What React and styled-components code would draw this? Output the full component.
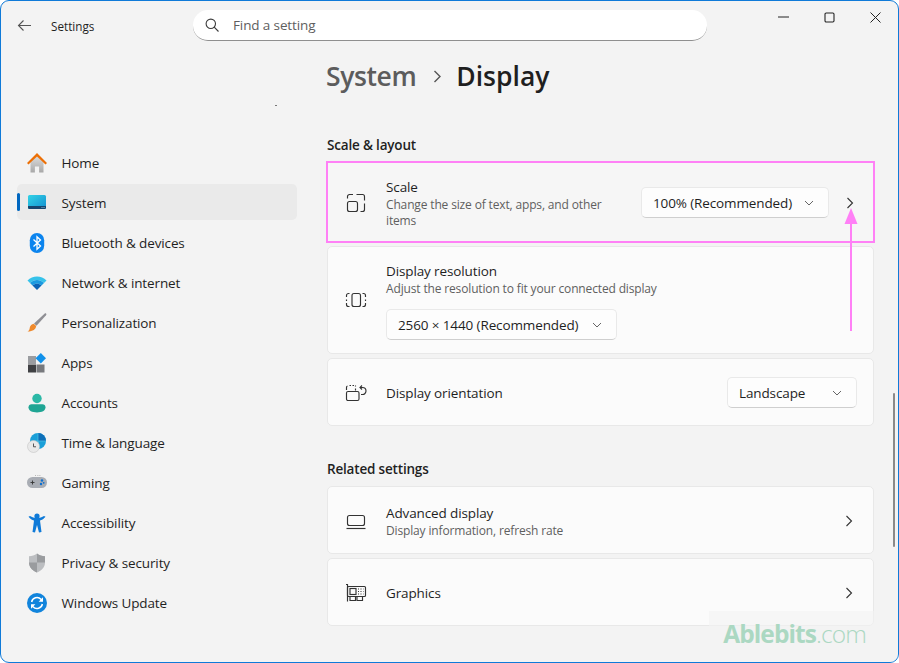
import styled, { createGlobalStyle } from 'styled-components';

const GlobalStyle = createGlobalStyle`
  html, body {
    margin: 0;
    background: #fff;
  }
  * {
    box-sizing: border-box;
  }
`;

const Window = styled.div`
  position: relative;
  width: 899px;
  height: 663px;
  overflow: hidden;
  background: #f3f3f3;
  border: 1.5px solid #0f7ad8;
  border-radius: 9px;
  font-family: 'Open Sans', 'Noto Sans', sans-serif;
  font-size: 13.5px;
  letter-spacing: -0.12px;
  color: #1f1f1f;
`;

const TitleBar = styled.header`
  display: flex;
  align-items: center;
  height: 49px;
  padding-left: 16px;
`;

const BackButton = styled.span`
  display: flex;
  width: 34px;
`;

const AppName = styled.span`
  width: 142px;
  font-size: 11.7px;
  letter-spacing: 0;
`;

const SearchBox = styled.div`
  display: flex;
  align-items: center;
  gap: 14px;
  width: 514px;
  height: 31px;
  margin-top: -1px;
  padding-left: 12px;
  background: #fff;
  border-bottom: 1px solid #8f8f8f;
  border-radius: 15px;
  color: #5e5e5e;
`;

const WindowControls = styled.div`
  display: flex;
  margin-left: auto;
  align-self: flex-start;
`;

const WindowButton = styled.span`
  display: flex;
  justify-content: center;
  align-items: center;
  width: 46px;
  height: 32px;
`;

const Body = styled.div`
  display: flex;
`;

const Sidebar = styled.nav`
  position: relative;
  display: flex;
  flex-direction: column;
  gap: 4px;
  width: 326px;
  padding: 93.5px 0 0 15.5px;
`;

const StrayDot = styled.i`
  position: absolute;
  left: 274px;
  top: 55px;
  width: 2px;
  height: 1px;
  background: #777;
`;

const NavItem = styled.div`
  position: relative;
  display: flex;
  align-items: center;
  gap: 15px;
  width: 280px;
  height: 36px;
  padding: 3px 0 0 10px;
  border-radius: 5px;
  background: ${(p) => (p.$active ? '#eaeaea' : 'transparent')};

  ${(p) =>
    p.$active &&
    `&::before {
      content: '';
      position: absolute;
      left: 0;
      top: 9px;
      width: 3px;
      height: 18px;
      border-radius: 2px;
      background: #0067c0;
    }`}
`;

const NavIcon = styled.svg`
  width: 20px;
  height: 20px;
  flex: none;
`;

const Main = styled.main`
  width: 547px;
  padding-top: 6px;
`;

const PageTitle = styled.h1`
  display: flex;
  align-items: center;
  height: 40px;
  margin: 0 0 39px -1px;
  font-size: 26.5px;
  font-weight: 600;
  letter-spacing: 0;
`;

const Crumb = styled.span`
  letter-spacing: -0.4px;
  color: #5c5c5c;
`;

const CrumbArrow = styled.span`
  display: flex;
  margin: 0 14px 0 17px;
`;

const SectionTitle = styled.h2`
  height: 20px;
  margin: ${(p) => (p.$first ? '0' : '33px')} 0 7px;
  font-size: 13.5px;
  font-weight: 600;
  line-height: 20px;
  letter-spacing: -0.18px;
`;

const CardList = styled.div`
  display: flex;
  flex-direction: column;
  gap: 4px;
`;

const Card = styled.section`
  display: flex;
  align-items: center;
  gap: 19px;
  height: ${(p) => p.$height}px;
  padding: ${(p) => (p.$stacked ? '0' : '2px')} 16px 0 17px;
  background: ${(p) => (p.$highlight ? '#f6f6f6' : '#fbfbfb')};
  border: 1px solid ${(p) => (p.$highlight ? 'transparent' : '#e8e8e8')};
  border-radius: ${(p) => (p.$highlight ? '0' : '5px')};
  ${(p) => p.$highlight && 'outline: 2px solid #ff80f6; outline-offset: -1px;'}
`;

const RowIcon = styled.svg`
  width: 22px;
  height: 22px;
  flex: none;
  fill: none;
  stroke: #333;
  stroke-width: 1.15;
`;

const RowText = styled.div`
  flex: 1;
  min-width: 0;
  ${(p) => p.$stacked && 'align-self: flex-start; padding-top: 14px;'}
`;

const RowTitle = styled.div`
  line-height: 20px;
`;

const RowDesc = styled.div`
  max-width: ${(p) => p.$max || '300px'};
  font-size: 12px;
  line-height: 16px;
  letter-spacing: -0.15px;
  color: #5f5f5f;
`;

const Select = styled.div`
  display: flex;
  justify-content: space-between;
  align-items: center;
  flex: none;
  width: ${(p) => p.$width}px;
  height: 31px;
  margin-top: ${(p) => (p.$stacked ? '12px' : '-2px')};
  padding: ${(p) => (p.$stacked ? '0' : '2px')} 14px 0 11px;
  background: #fdfdfd;
  border: 1px solid #e9e9e9;
  border-bottom-color: #cfcfcf;
  border-radius: 5px;
`;

const ChevronBox = styled.span`
  display: flex;
  justify-content: center;
  flex: none;
  width: ${(p) => (p.$tight ? 10 : 16)}px;
  ${(p) => p.$tight && 'margin: 0 2px 0 -3px;'}
`;

const Scrollbar = styled.i`
  position: absolute;
  right: 3px;
  top: 392px;
  width: 2px;
  height: 154px;
  border-radius: 1px;
  background: #8a8a8a;
`;

const Watermark = styled.div`
  position: absolute;
  right: 0;
  bottom: 0;
  padding: 8px 32px 13px 14px;
  background: rgba(243, 243, 243, 0.55);
  font-size: 24.5px;
  line-height: 30px;
  letter-spacing: -0.9px;
  font-weight: 700;
  color: #abd8c2;

  span {
    font-weight: 300;
  }
`;

const Annotation = styled.svg`
  position: absolute;
  left: 838px;
  top: 204px;
  width: 24px;
  height: 128px;
`;

const Chevron = () => (
  <svg width="8" height="12" viewBox="0 0 8 12" fill="none">
    <path d="M1.500 1 6.500 6l-5 5" stroke="#333" strokeWidth="1.100" />
  </svg>
);

const ChevronDown = () => (
  <svg width="10" height="6" viewBox="0 0 10 6" fill="none">
    <path d="M1 1l4 4 4-4" stroke="#666" strokeWidth="1" />
  </svg>
);

const icons = {
  home: (
    <>
      <defs>
        <linearGradient id="homeWall" x1="0" y1="0" x2="0" y2="1">
          <stop offset="0" stopColor="#dcdcdc" />
          <stop offset="1" stopColor="#a8a8a8" />
        </linearGradient>
      </defs>
      <path d="M3.500 9 10 3l6.500 6v10.500h-4.400v-6H7.900v6H3.500z" fill="url(#homeWall)" />
      <path d="M0 10 10 0l10 10-1.500 1.500L10 3.400 1.500 11.500z" fill="#ec6f05" />
    </>
  ),
  system: (
    <>
      <defs>
        <linearGradient id="sysScreen" x1="0" y1="0" x2="1" y2="1">
          <stop offset="0" stopColor="#33d3e6" />
          <stop offset="1" stopColor="#128fd0" />
        </linearGradient>
      </defs>
      <rect x="1" y="2" width="18" height="14" rx="1.500" fill="url(#sysScreen)" />
      <path d="M1 13h18v1.500a1.500 1.500 0 0 1-1.500 1.500h-15A1.500 1.500 0 0 1 1 14.500z" fill="#17456e" />
      <path d="M14.500 14.500h1M16.500 14.500h1" stroke="#9fd3ea" strokeWidth="0.800" />
    </>
  ),
  bluetooth: (
    <>
      <rect x="2.800" y="0" width="14.400" height="20" rx="7.200" fill="#0b84ee" />
      <path d="M6.500 6.500l7 6.500-3.500 3.200V3.800l3.500 3.200-7 6.500" fill="none" stroke="#fff" strokeWidth="1.300" />
    </>
  ),
  wifi: (
    <>
      <path d="M.5 7.500C5.500 2.200 14.500 2.200 19.500 7.500L17 10C13 6 7 6 3 10z" fill="#36c2ea" />
      <path d="M3 10c4-4 10-4 14 0l-2.500 2.500c-2.500-2.500-6.500-2.500-9 0z" fill="#1a9ae0" />
      <path d="M5.500 12.500c2.500-2.500 6.500-2.500 9 0L10 17z" fill="#0b63b5" />
    </>
  ),
  brush: (
    <>
      <path d="M19 .5c.6.500.5 1.200 0 1.800L9.500 12.800 7 10.500 17.500.8c.5-.4 1-.6 1.500-.3z" fill="#8f8f94" />
      <path d="M6.700 10.800 9.200 13c-.3 3-3 5.500-8.700 5.500 2-1 2-2.200 2.300-4 .3-1.800 2-3.500 3.900-3.700z" fill="#ef8a2d" />
    </>
  ),
  apps: (
    <>
      <rect x="1" y="3" width="8" height="8" fill="#9a9ca0" />
      <rect x="1" y="11.500" width="8" height="8" fill="#3f4043" />
      <rect x="9.500" y="11.500" width="8" height="8" fill="#77797d" />
      <path d="M13.800 0 19 5.200l-5.200 5.200-5.200-5.200z" fill="#1191ea" />
    </>
  ),
  accounts: (
    <>
      <circle cx="10" cy="5.500" r="4.700" fill="#2bb8a6" />
      <path d="M1.500 14.300c0-1.800 1.400-3 3-3h11c1.600 0 3 1.200 3 3 0 3.400-3.600 5.200-8.500 5.200s-8.500-1.800-8.500-5.200z" fill="#1fa594" />
    </>
  ),
  time: (
    <>
      <circle cx="11" cy="8" r="8" fill="#1a9fd8" />
      <path d="M11 0a8 8 0 0 1 8 8h-8z" fill="#0d6fb8" />
      <path d="M3 8h16M11 0v16" stroke="#5ecae8" strokeWidth="0.600" />
      <circle cx="6.500" cy="13.500" r="6" fill="#e9e9e9" stroke="#c4c4c4" strokeWidth="0.600" />
      <path d="M6.500 10.500v3.300h2.500" fill="none" stroke="#444" strokeWidth="0.900" />
    </>
  ),
  gaming: (
    <>
      <rect x="0" y="4" width="20" height="11" rx="5.500" fill="#a9adb4" />
      <path d="M3.500 9.500h4M5.500 7.500v4" stroke="#333" strokeWidth="0.900" />
      <circle cx="15" cy="7.500" r="1.200" fill="#0b6fd0" />
      <circle cx="14" cy="11" r="1.200" fill="#0b6fd0" />
      <circle cx="16.700" cy="9.800" r="0.900" fill="#0b6fd0" />
      <path d="M8 2.500h.8M10.500 2.500h.8M12.500 2.500h.8" stroke="#888" strokeWidth="0.700" />
    </>
  ),
  accessibility: (
    <>
      <circle cx="10" cy="3" r="2.600" fill="#0f7ad8" />
      <path d="M1.500 3.800 3 3c2 1.300 4 2 7 2s5-.7 7-2l1.500.8c-1.500 2-3.500 3.200-5.500 3.800L14.500 19l-2.500.5L10 12l-2 7.500-2.500-.5L7 7.600C5 7 3 5.800 1.500 3.800z" fill="#0f7ad8" />
    </>
  ),
  shield: (
    <>
      <path d="M10 .5c2.500 1.800 5 2.600 8 2.800v6.200c0 4.700-3.300 8.200-8 10-4.700-1.800-8-5.300-8-10V3.300C5 3.100 7.500 2.300 10 .5z" fill="#bcbec1" />
      <path d="M10 .5c2.500 1.800 5 2.600 8 2.800v6.200h-8zM10 9.500H2c0 4.700 3.300 8.200 8 10z" fill="#9a9c9f" />
    </>
  ),
  update: (
    <>
      <circle cx="10" cy="10" r="10" fill="#1184dc" />
      <path d="M4.600 9A5.500 5.500 0 0 1 14 6.300L15.400 8M15.400 11A5.500 5.500 0 0 1 6 13.700L4.600 12" fill="none" stroke="#fff" strokeWidth="1.500" />
      <path d="M16 4.300V8.700h-4.400zM4 15.700v-4.400h4.400z" fill="#fff" />
    </>
  ),
};

const navItems = [
  ['home', 'Home'],
  ['system', 'System'],
  ['bluetooth', 'Bluetooth & devices'],
  ['wifi', 'Network & internet'],
  ['brush', 'Personalization'],
  ['apps', 'Apps'],
  ['accounts', 'Accounts'],
  ['time', 'Time & language'],
  ['gaming', 'Gaming'],
  ['accessibility', 'Accessibility'],
  ['shield', 'Privacy & security'],
  ['update', 'Windows Update'],
];

const ScaleIcon = () => (
  <RowIcon viewBox="0 0 22 22">
    <path d="M2.500 6.500V4.500a2 2 0 0 1 2-2H8M11.500 2.500h6a2 2 0 0 1 2 2v4M19.500 11.500v6a2 2 0 0 1-2 2h-2" />
    <rect x="2.500" y="9.500" width="10" height="10" rx="2" />
  </RowIcon>
);

const ResolutionIcon = () => (
  <RowIcon viewBox="0 0 22 22">
    <rect x="7" y="4.500" width="8.500" height="13" rx="2" />
    <path d="M4.500 4.500h-1a2 2 0 0 0-2 2V8M1.500 10.500v1.500M1.500 14v1.500a2 2 0 0 0 2 2h1M17.500 4.500h1a2 2 0 0 1 2 2V8M20.500 10.500v1.500M20.500 14v1.500a2 2 0 0 1-2 2h-1" />
  </RowIcon>
);

const OrientationIcon = () => (
  <RowIcon viewBox="0 0 22 22">
    <path d="M1.500 8V5.500a1.500 1.500 0 0 1 1-1.500M4.500 3.500h1.500M7.500 3.500h1.500M10.500 3.500v1M10.500 6.500v2" />
    <rect x="1.500" y="9.500" width="12.500" height="9" rx="1.500" />
    <path d="M15 5.500h2.500a3.500 3.500 0 0 1 0 7H16" />
    <path d="M17 3.500 15 5.500l2 2" />
  </RowIcon>
);

const LaptopIcon = () => (
  <RowIcon viewBox="0 0 22 22">
    <rect x="2.500" y="5.500" width="17" height="10" rx="2" />
    <path d="M1.500 18.500h19" />
  </RowIcon>
);

const GraphicsIcon = () => (
  <RowIcon viewBox="0 0 22 22">
    <path d="M1 2.500h1.500v17" />
    <rect x="2.500" y="4.500" width="18" height="10" rx="1" />
    <rect x="5" y="6.500" width="6" height="6" />
    <path d="M13 7h1M15.500 7h1M18 7h.5M13 9.500h1M15.500 9.500h1M18 9.500h.5M13 12h1M15.500 12h1M18 12h.5" />
    <path d="M5 14.500v4h5.500v-4M12 14.500v4h5.500v-4" />
  </RowIcon>
);

const App = () => {
  return (
    <Window>
      <GlobalStyle />
      <TitleBar>
        <BackButton>
          <svg width="15" height="13" viewBox="0 0 15 13" fill="none" stroke="#555" strokeWidth="1.100">
            <path d="M14 6.500H1.500M6.500 1.500l-5 5 5 5" />
          </svg>
        </BackButton>
        <AppName>Settings</AppName>
        <SearchBox>
          <svg width="14" height="14" viewBox="0 0 14 14" fill="none" stroke="#3c3c3c" strokeWidth="1.100">
            <circle cx="5.800" cy="5.800" r="4.700" />
            <path d="M9.200 9.200l4.300 4.300" />
          </svg>
          Find a setting
        </SearchBox>
        <WindowControls>
          <WindowButton>
            <svg width="11" height="2" viewBox="0 0 11 2"><path d="M0 1h11" stroke="#222" strokeWidth="1" /></svg>
          </WindowButton>
          <WindowButton>
            <svg width="11" height="11" viewBox="0 0 11 11" fill="none"><rect x="1" y="1" width="9" height="9" rx="1.200" stroke="#222" strokeWidth="1.100" /></svg>
          </WindowButton>
          <WindowButton>
            <svg width="11" height="11" viewBox="0 0 11 11" fill="none"><path d="M.5.500l10 10M10.500.500l-10 10" stroke="#222" strokeWidth="1" /></svg>
          </WindowButton>
        </WindowControls>
      </TitleBar>

      <Body>
        <Sidebar>
          <StrayDot />
          {navItems.map(([icon, label]) => (
            <NavItem key={label} $active={label === 'System'}>
              <NavIcon viewBox="0 0 20 20">{icons[icon]}</NavIcon>
              {label}
            </NavItem>
          ))}
        </Sidebar>

        <Main>
          <PageTitle>
            <Crumb>System</Crumb>
            <CrumbArrow>
              <svg width="9" height="13" viewBox="0 0 9 13" fill="none">
                <path d="M1.500 1l5.500 5.500L1.500 12" stroke="#555" strokeWidth="1.400" />
              </svg>
            </CrumbArrow>
            Display
          </PageTitle>

          <SectionTitle $first>Scale &amp; layout</SectionTitle>
          <CardList>
            <Card $height={80} $highlight>
              <ScaleIcon />
              <RowText>
                <RowTitle>Scale</RowTitle>
                <RowDesc $max="225px">Change the size of text, apps, and other items</RowDesc>
              </RowText>
              <Select $width={188}>
                100% (Recommended)
                <ChevronDown />
              </Select>
              <ChevronBox $tight><Chevron /></ChevronBox>
            </Card>

            <Card $height={108} $stacked>
              <ResolutionIcon />
              <RowText $stacked>
                <RowTitle>Display resolution</RowTitle>
                <RowDesc>Adjust the resolution to fit your connected display</RowDesc>
                <Select $width={231} $stacked>
                  2560 × 1440 (Recommended)
                  <ChevronDown />
                </Select>
              </RowText>
            </Card>

            <Card $height={68}>
              <OrientationIcon />
              <RowText>
                <RowTitle>Display orientation</RowTitle>
              </RowText>
              <Select $width={130}>
                Landscape
                <ChevronDown />
              </Select>
            </Card>
          </CardList>

          <SectionTitle>Related settings</SectionTitle>
          <CardList>
            <Card $height={68}>
              <LaptopIcon />
              <RowText>
                <RowTitle>Advanced display</RowTitle>
                <RowDesc>Display information, refresh rate</RowDesc>
              </RowText>
              <ChevronBox><Chevron /></ChevronBox>
            </Card>
            <Card $height={68}>
              <GraphicsIcon />
              <RowText>
                <RowTitle>Graphics</RowTitle>
              </RowText>
              <ChevronBox><Chevron /></ChevronBox>
            </Card>
          </CardList>
        </Main>
      </Body>

      <Scrollbar />
      <Watermark>Ablebits<span>.com</span></Watermark>
      <Annotation viewBox="0 0 24 128">
        <path d="M12 3l6.500 16h-13z" fill="#ff80f6" />
        <path d="M12 15v111" stroke="#ff80f6" strokeWidth="2" />
      </Annotation>
    </Window>
  );
};

export default App;
